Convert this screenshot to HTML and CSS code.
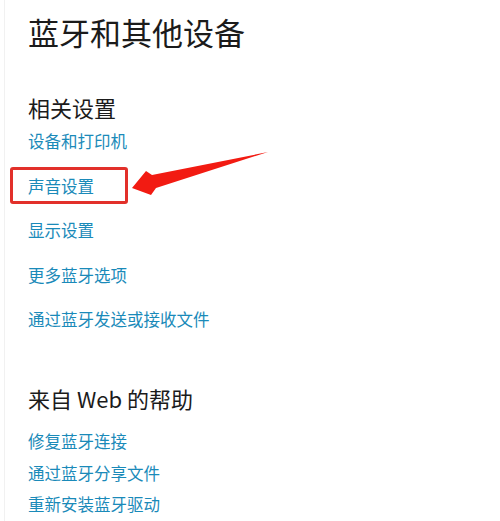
FILE: index.html
```html
<!DOCTYPE html>
<html lang="zh-CN">
<head>
<meta charset="utf-8">
<link rel="stylesheet" href="styles.css">
</head>
<body>
<div class="page">
  <h1 class="title">蓝牙和其他设备</h1>
  <h2 class="section-title s1">相关设置</h2>
  <div class="links wide">
    <a class="link">设备和打印机</a>
    <a class="link">声音设置</a>
    <a class="link">显示设置</a>
    <a class="link">更多蓝牙选项</a>
    <a class="link">通过蓝牙发送或接收文件</a>
  </div>
  <h2 class="section-title s2">来自 Web 的帮助</h2>
  <div class="links tight">
    <a class="link">修复蓝牙连接</a>
    <a class="link">通过蓝牙分享文件</a>
    <a class="link">重新安装蓝牙驱动</a>
  </div>
  <div class="highlight"></div>
  <svg class="arrow" width="500" height="521" viewBox="0 0 500 521">
    <polygon points="132,188 146,171 152,175 268,152 156,188 151,195" fill="#f21b12"/>
  </svg>
</div>
</body>
</html>
```
FILE: styles.css
```css
html, body {
  margin: 0;
  padding: 0;
  background: #ffffff;
}
.page {
  position: relative;
  width: 500px;
  height: 521px;
  overflow: hidden;
  box-sizing: border-box;
  border-left: 1px solid #f1f1f1;
  margin-left: 4px;
  padding-left: 23px;
  font-family: "Noto Sans CJK SC", "Noto Sans", sans-serif;
}
.title {
  margin: 12px 0 0;
  font-size: 31px;
  font-weight: 400;
  line-height: 40px;
  color: #1b1b1b;
}
.section-title {
  margin: 0;
  font-size: 22px;
  font-weight: 400;
  line-height: 30px;
  color: #1b1b1b;
}
.s1 { margin-top: 40px; }
.s2 { margin-top: 52px; }
.links {
  display: flex;
  flex-direction: column;
  align-items: flex-start;
}
.wide { margin-top: 7px; gap: 20.5px; }
.tight { margin-top: 16px; gap: 7.5px; }
.link {
  font-size: 16.5px;
  line-height: 24px;
  color: #1a8ab9;
}
.highlight {
  position: absolute;
  left: 5px;
  top: 167px;
  width: 112px;
  height: 31px;
  border: 3px solid #e2302a;
  border-radius: 3px;
}
.arrow {
  position: absolute;
  left: -5px;
  top: 0;
}
```
